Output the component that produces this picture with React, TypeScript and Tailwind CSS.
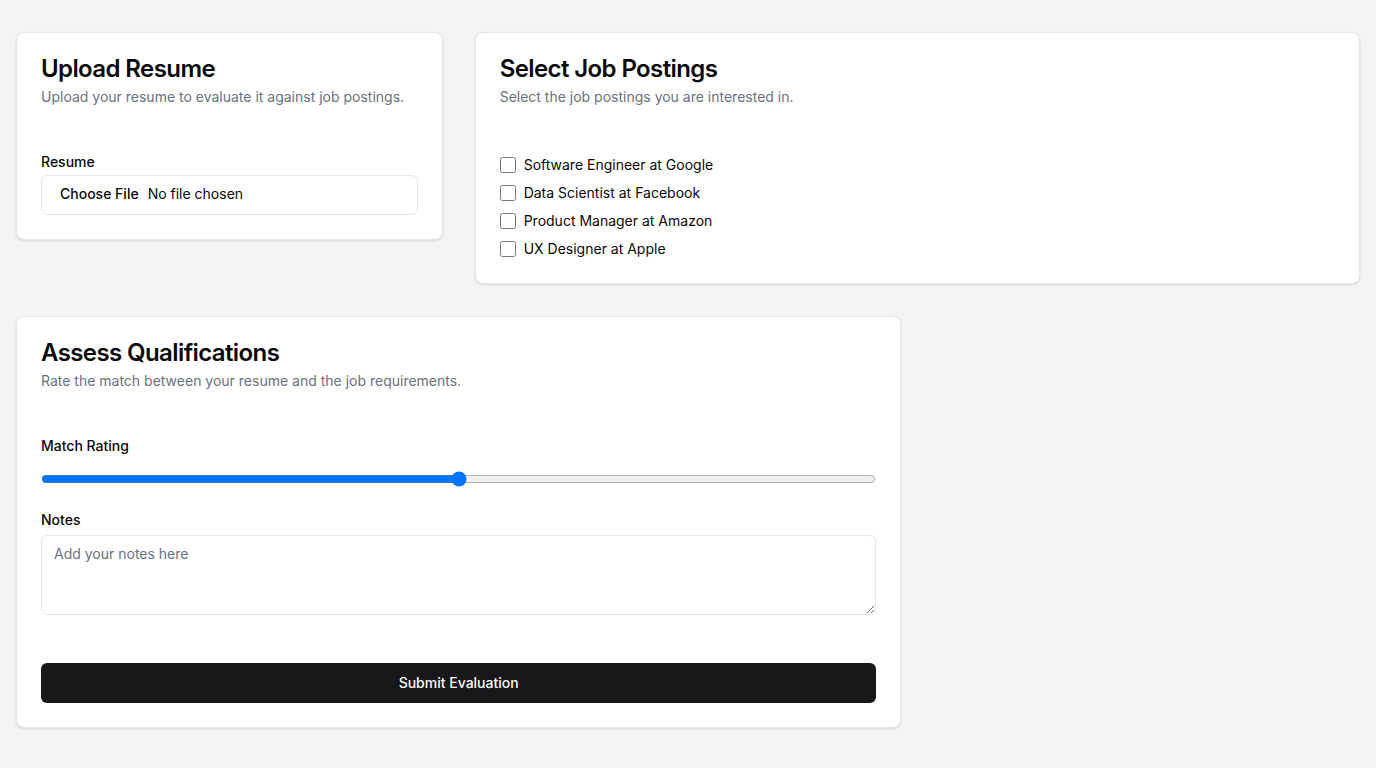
import React from "react";

export default function App() {
  const jobs = [
    "Software Engineer at Google",
    "Data Scientist at Facebook",
    "Product Manager at Amazon",
    "UX Designer at Apple",
  ];
  return (
    <div
      className="min-h-screen bg-gray-100 px-4 py-8 text-[#09090b]"
      style={{ fontFamily: "Inter, 'Liberation Sans', sans-serif" }}
    >
      <div className="grid grid-cols-3 items-start gap-8">
        <div className="rounded-lg border border-gray-200 bg-white shadow-sm">
          <div className="flex flex-col space-y-1.5 p-6">
            <h3 className="text-2xl font-semibold leading-none tracking-tight">Upload Resume</h3>
            <p className="text-sm text-gray-500">Upload your resume to evaluate it against job postings.</p>
          </div>
          <div className="p-6">
            <div className="space-y-1.5">
              <label className="block text-sm font-medium leading-none">Resume</label>
              <input
                type="file"
                className="flex h-10 w-full rounded-md border border-gray-200 bg-white px-3 py-2 text-sm file:mr-[3px] file:border-0 file:bg-transparent file:px-1.5 file:text-sm file:font-medium"
              />
            </div>
          </div>
        </div>

        <div className="col-span-2 rounded-lg border border-gray-200 bg-white shadow-sm">
          <div className="flex flex-col space-y-1.5 p-6">
            <h3 className="text-2xl font-semibold leading-none tracking-tight">Select Job Postings</h3>
            <p className="text-sm text-gray-500">Select the job postings you are interested in.</p>
          </div>
          <div className="p-6">
            <div className="space-y-2">
              {jobs.map((j) => (
                <div key={j} className="flex items-center gap-2">
                  <input type="checkbox" className="m-0 h-4 w-4" />
                  <span className="text-sm leading-5">{j}</span>
                </div>
              ))}
            </div>
          </div>
        </div>

        <div className="col-span-2 rounded-lg border border-gray-200 bg-white shadow-sm">
          <div className="flex flex-col space-y-1.5 p-6">
            <h3 className="text-2xl font-semibold leading-none tracking-tight">Assess Qualifications</h3>
            <p className="text-sm text-gray-500">Rate the match between your resume and the job requirements.</p>
          </div>
          <div className="space-y-4 p-6">
            <div className="space-y-2">
              <label className="block text-sm font-medium leading-none">Match Rating</label>
              <input type="range" min={0} max={100} defaultValue={50} className="block h-9 w-full" />
            </div>
            <div className="space-y-2">
              <label className="block text-sm font-medium leading-none">Notes</label>
              <textarea
                placeholder="Add your notes here"
                className="flex h-20 w-full rounded-md border border-gray-200 bg-white px-3 py-2 text-sm placeholder:text-gray-500"
              />
            </div>
          </div>
          <div className="flex items-center p-6">
            <button className="inline-flex h-10 w-full items-center justify-center rounded-md bg-[#18181b] px-4 py-2 text-sm font-medium text-[#fafafa]">
              Submit Evaluation
            </button>
          </div>
        </div>
      </div>
    </div>
  );
}
